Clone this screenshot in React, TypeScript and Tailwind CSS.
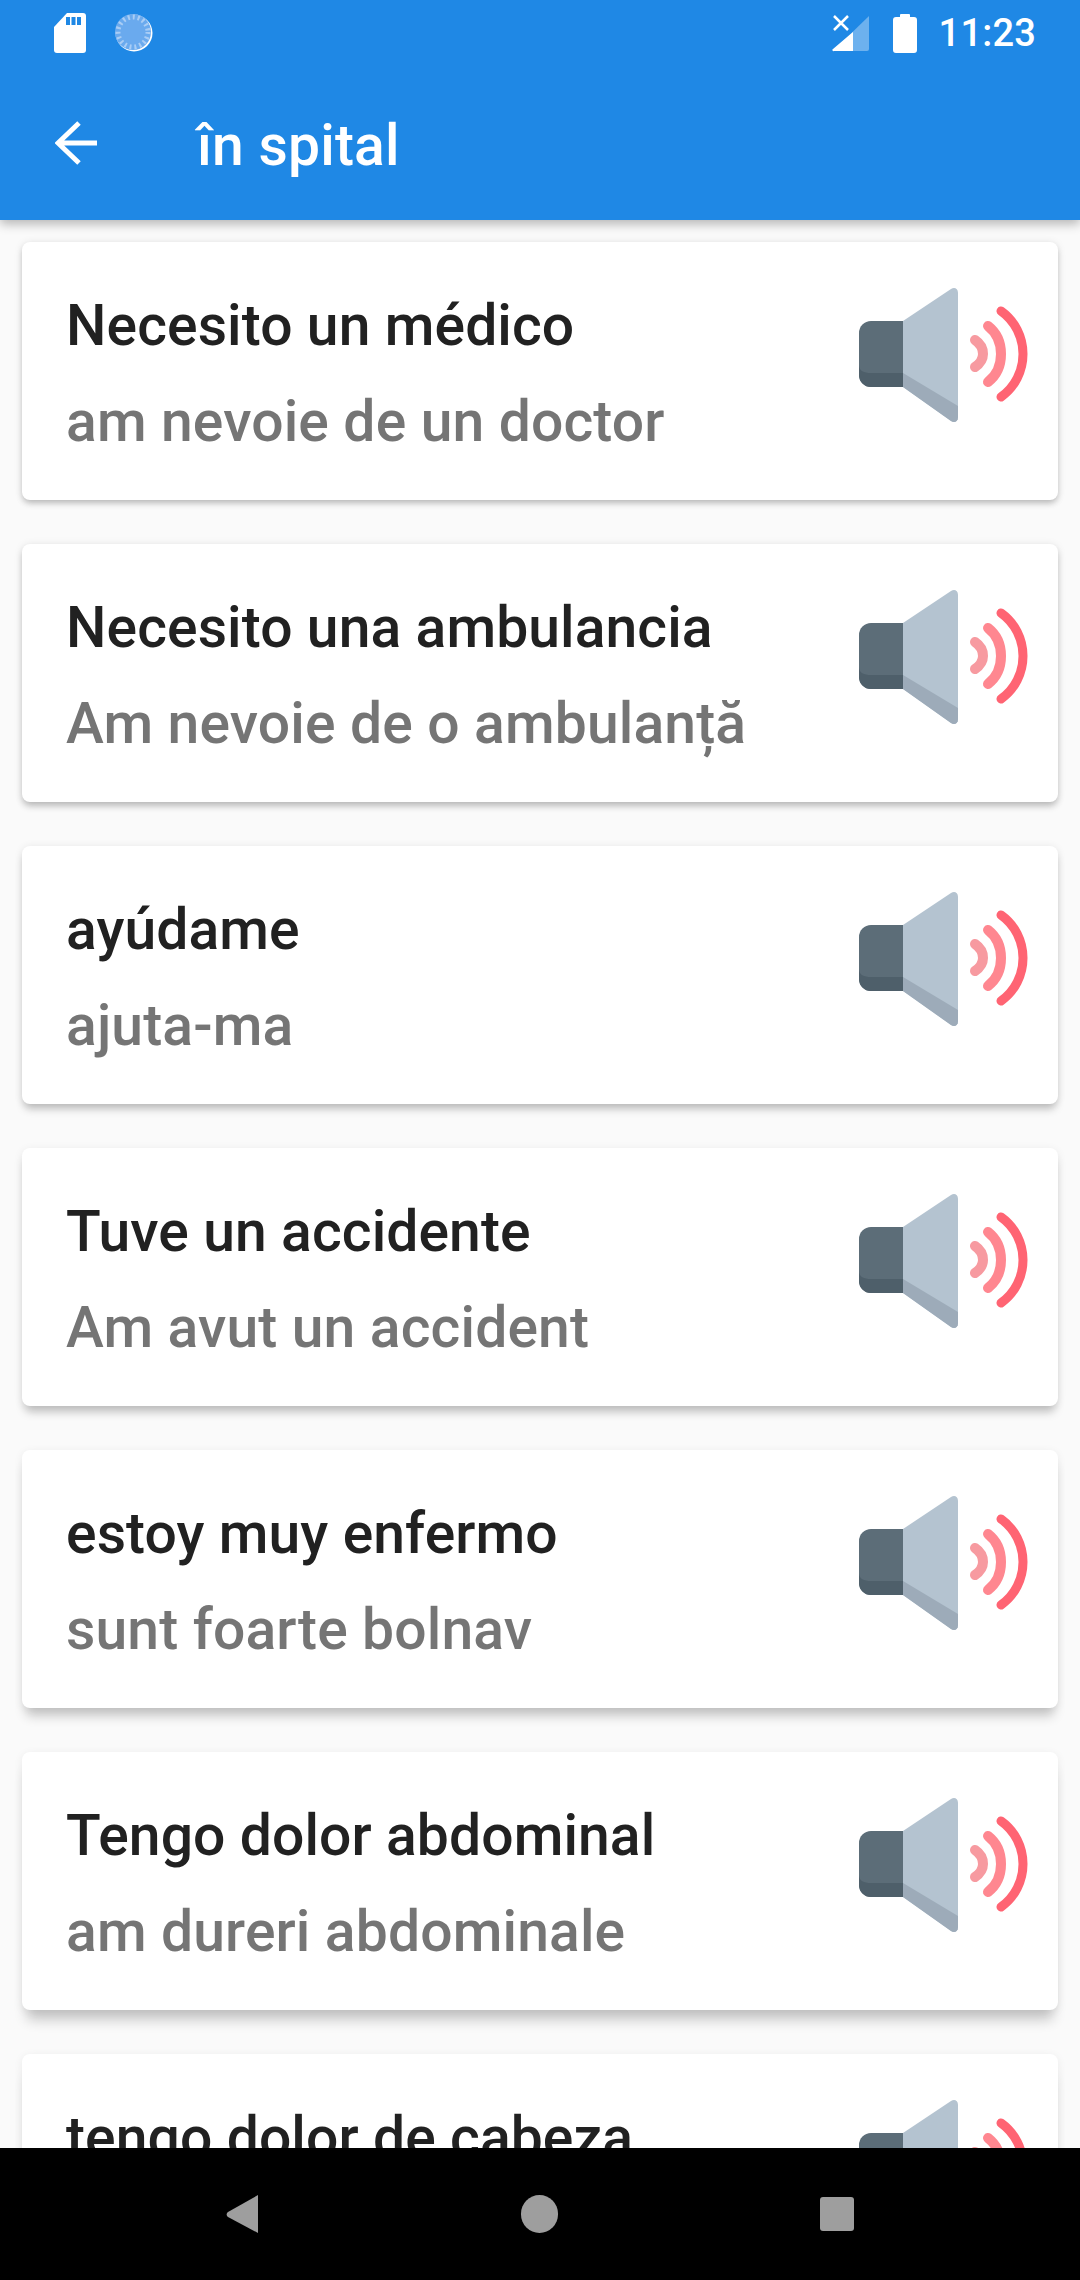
const phrases = [
  { es: "Necesito un médico", ro: "am nevoie de un doctor", shadow: "shadow-[0_4px_6px_-1px_rgba(0,0,0,0.22),0_1px_8px_rgba(0,0,0,0.1)]" },
  { es: "Necesito una ambulancia", ro: "Am nevoie de o ambulanță", shadow: "shadow-[0_5px_7px_-1px_rgba(0,0,0,0.22),0_1px_8px_rgba(0,0,0,0.1)]" },
  { es: "ayúdame", ro: "ajuta-ma", shadow: "shadow-[0_7px_8px_-2px_rgba(0,0,0,0.22),0_1px_9px_rgba(0,0,0,0.09)]" },
  { es: "Tuve un accidente", ro: "Am avut un accident", shadow: "shadow-[0_9px_10px_-3px_rgba(0,0,0,0.21),0_2px_10px_rgba(0,0,0,0.08)]" },
  { es: "estoy muy enfermo", ro: "sunt foarte bolnav", shadow: "shadow-[0_12px_12px_-4px_rgba(0,0,0,0.2),0_2px_10px_rgba(0,0,0,0.07)]" },
  { es: "Tengo dolor abdominal", ro: "am dureri abdominale", shadow: "shadow-[0_15px_13px_-5px_rgba(0,0,0,0.2),0_2px_10px_rgba(0,0,0,0.07)]" },
  { es: "tengo dolor de cabeza", ro: "", shadow: "shadow-[0_18px_14px_-6px_rgba(0,0,0,0.2),0_2px_10px_rgba(0,0,0,0.07)]" },
];

const Speaker = () => (
  <svg width="185" height="150" viewBox="0 0 185 150" className="shrink-0 mt-[38px]">
    <path d="M21 41h32v66H21a12 12 0 0 1-12-12V53a12 12 0 0 1 12-12z" fill="#5c6d78" />
    <path d="M9 85c0 6 5 8 12 8h32v14H21A12 12 0 0 1 9 95z" fill="#4e5f6a" />
    <path d="M53 41 101 9c3-2 7-1 7 4v124c0 5-4 6-7 4L53 107z" fill="#b4c3d0" />
    <path d="M53 93l55 33v11c0 5-4 6-7 4L53 107z" fill="#9dabb9" />
    <path d="M125 60c6 4 8 9 8 14s-2 9-8 13" fill="none" stroke="#f79aa0" strokeWidth="10" strokeLinecap="round" />
    <path d="M138 46c9 7 13 17 13 28s-4 21-13 28" fill="none" stroke="#ff8790" strokeWidth="10" strokeLinecap="round" />
    <path d="M151 31c14 10 22 26 22 43s-8 33-22 43" fill="none" stroke="#ff6473" strokeWidth="9" strokeLinecap="round" />
  </svg>
);

export default function App() {
  return (
    <div className="flex flex-col h-[2280px] w-[1080px] overflow-hidden bg-[#fafafa] font-['Roboto',sans-serif]">
      {/* Header */}
      <div className="relative z-10 bg-[#1f88e5] text-white h-[220px] shrink-0 shadow-[0_4px_10px_rgba(0,0,0,0.28)]">
        <div className="flex items-center h-[66px] pl-[54px] pr-[44px]">
          <svg width="32" height="40" viewBox="0 0 32 40">
            <path d="M13 0h16a3 3 0 0 1 3 3v34a3 3 0 0 1-3 3H3a3 3 0 0 1-3-3V14z" fill="#fff" />
            <path d="M12 4h4v8h-4zM17.5 4h4v8h-4zM23 4h4v8h-4z" fill="#1f88e5" />
          </svg>
          <svg width="38" height="40" viewBox="0 0 38 40" className="ml-[29px]">
            <circle cx="19" cy="20" r="18.5" fill="#fff" />
            <circle cx="18" cy="19" r="18" fill="#6aaaee" />
            <circle cx="18" cy="19" r="15" fill="none" stroke="#a9cdf5" strokeWidth="5" strokeDasharray="2 3" />
          </svg>
          <div className="flex-1" />
          <svg width="38" height="38" viewBox="0 0 38 38">
            <path d="M37 2v33a2 2 0 0 1-2 2H1z" fill="#fff" fillOpacity="0.35" />
            <path d="M21 18v19H2a1 1 0 0 1-1-2z" fill="#fff" />
            <path d="M2 2l14 14M16 2 2 16" stroke="#fff" strokeWidth="2.5" fill="none" />
          </svg>
          <svg width="24" height="40" viewBox="0 0 24 40" className="ml-[23px]">
            <path d="M7 4V2a1 1 0 0 1 1-1h8a1 1 0 0 1 1 1v2h4a3 3 0 0 1 3 3v30a3 3 0 0 1-3 3H3a3 3 0 0 1-3-3V7a3 3 0 0 1 3-3z" fill="#fff" />
          </svg>
          <span className="ml-[22px] text-[38px] leading-none font-medium tracking-[0.2px]">11:23</span>
        </div>
        <div className="flex items-center h-[154px] pl-[55px]">
          <svg width="44" height="44" viewBox="0 0 44 44">
            <path d="M3 22h39M24 2 3 22l21 20" fill="none" stroke="#fff" strokeWidth="5" />
          </svg>
          <h1 className="ml-[98px] mt-[5px] text-[57px] leading-none font-medium tracking-[0.2px]">în spital</h1>
        </div>
      </div>

      {/* Phrase list */}
      <div className="flex-1 min-h-0 overflow-hidden flex flex-col gap-[44px] px-[22px] pt-[22px]">
        {phrases.map((p) => (
          <div key={p.es} className={`flex justify-between shrink-0 h-[258px] bg-white rounded-[8px] pl-[44px] pr-[23px] ${p.shadow}`}>
            <div className="flex flex-col pt-[52px]">
              <div className="text-[57px] leading-[64px] font-medium text-[#212121] tracking-[0.1px]">{p.es}</div>
              {p.ro && <div className="mt-[32px] text-[57px] leading-[64px] font-medium text-[#757575] tracking-[0.15px]">{p.ro}</div>}
            </div>
            <Speaker />
          </div>
        ))}
      </div>

      {/* Navigation bar */}
      <div className="relative z-10 flex items-center h-[132px] shrink-0 bg-black pl-[226px]">
        <svg width="32" height="38" viewBox="0 0 32 38">
          <path d="M32 0v38L2 22a3 3 0 0 1 0-5z" fill="#9e9e9e" />
        </svg>
        <div className="ml-[263px] h-[38px] w-[37px] rounded-full bg-[#9e9e9e]" />
        <div className="ml-[262px] h-[34px] w-[34px] rounded-[3px] bg-[#9e9e9e]" />
      </div>
    </div>
  );
}
